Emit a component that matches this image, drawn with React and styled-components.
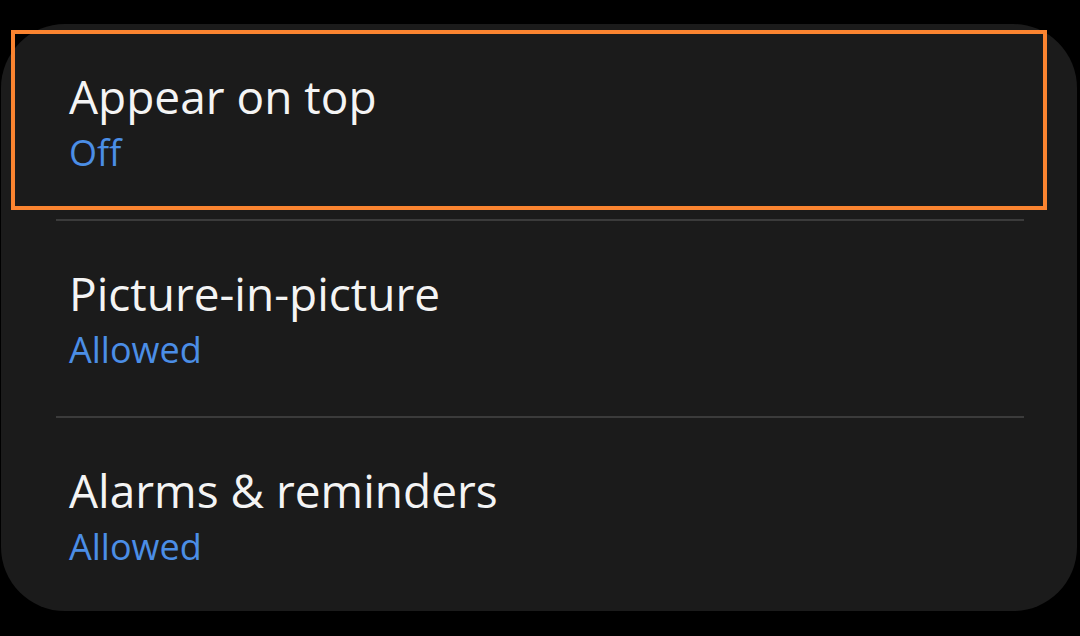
import styled, { createGlobalStyle } from "styled-components";

const GlobalStyle = createGlobalStyle`
  html, body {
    margin: 0;
    padding: 0;
    background: #000;
  }
  body {
    font-family: "Open Sans", Roboto, sans-serif;
  }
`;

const Page = styled.div`
  width: 1080px;
  height: 636px;
  background: #000;
  padding: 24px 0 0 1px;
  box-sizing: border-box;
  overflow: hidden;
`;

const Card = styled.div`
  position: relative;
  width: 1076px;
  height: 587px;
  background: #1b1b1b;
  border-radius: 64px;
  display: flex;
  flex-direction: column;
`;

const Row = styled.div`
  height: ${(p) => p.$height}px;
  padding-left: 68px;
  display: flex;
  flex-direction: column;
  box-sizing: border-box;
  padding-top: 52px;
`;

const Title = styled.div`
  color: #f4f4f4;
  font-size: 46px;
  line-height: 40px;
`;

const Status = styled.div`
  color: #4b8ee6;
  font-size: 36px;
  line-height: 36px;
  margin-top: 19px;
`;

const Divider = styled.div`
  height: 2px;
  margin: 0 53px 0 55px;
  background: #3b3b3b;
`;

const Highlight = styled.div`
  position: absolute;
  left: 10px;
  top: 6px;
  width: 1036px;
  height: 180px;
  border: 4px solid #fb8430;
  box-sizing: border-box;
  pointer-events: none;
`;

const items = [
  { title: "Appear on top", status: "Off", height: 195 },
  { title: "Picture-in-picture", status: "Allowed", height: 195 },
  { title: "Alarms & reminders", status: "Allowed", height: 193 },
];

export default function App() {
  return (
    <>
      <GlobalStyle />
      <Page>
        <Card>
          {items.map((it, i) => (
            <div key={it.title}>
              {i > 0 && <Divider />}
              <Row $height={it.height}>
                <Title>{it.title}</Title>
                <Status>{it.status}</Status>
              </Row>
            </div>
          ))}
          <Highlight />
        </Card>
      </Page>
    </>
  );
}
